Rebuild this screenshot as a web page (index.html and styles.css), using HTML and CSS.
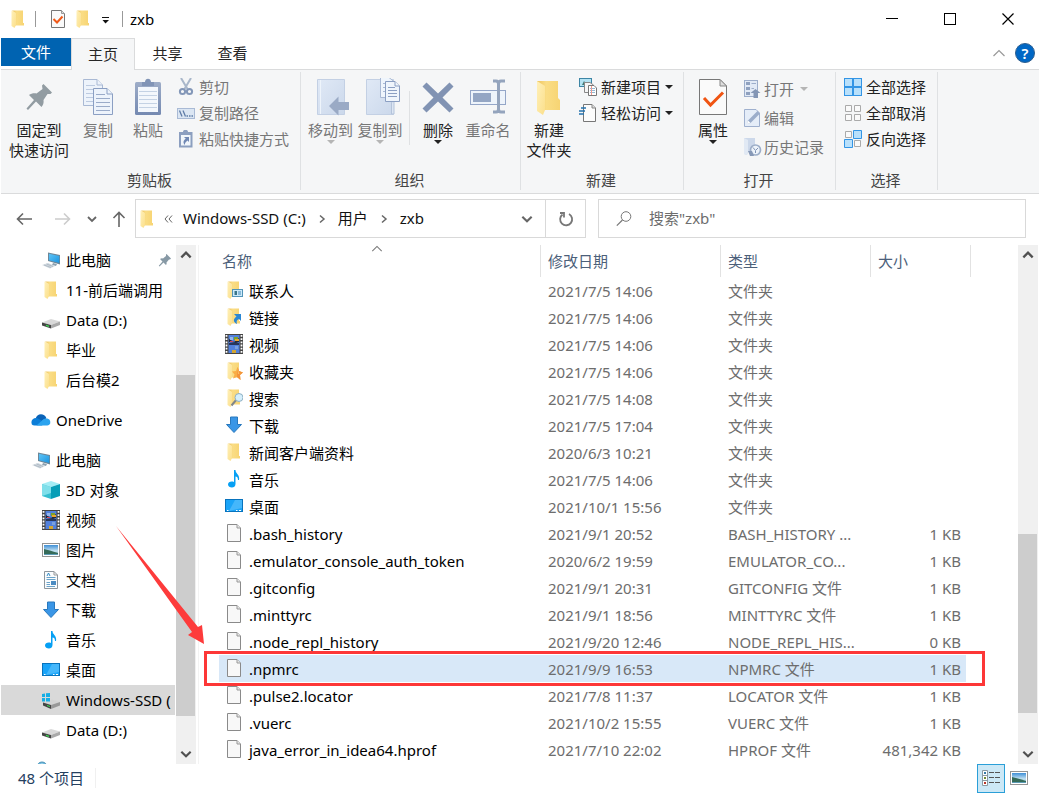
FILE: index.html
```html
<!DOCTYPE html>
<html lang="zh-CN">
<head>
<meta charset="utf-8">
<title>zxb</title>
<link rel="stylesheet" href="styles.css">
</head>
<body>
<svg class="sprite" aria-hidden="true">
  <defs>
    <linearGradient id="gold" x1="0" y1="0" x2="1" y2="0"><stop offset="0" stop-color="#eec35d"/><stop offset=".4" stop-color="#fadd85"/><stop offset="1" stop-color="#f7d473"/></linearGradient>
    <linearGradient id="flap" x1="0" y1="0" x2="1" y2="1"><stop offset="0" stop-color="#fff0b8"/><stop offset="1" stop-color="#fbdf8b"/></linearGradient>
    <linearGradient id="screen" x1="0" y1="0" x2="1" y2="1"><stop offset="0" stop-color="#5ec4f7"/><stop offset="1" stop-color="#1b95e0"/></linearGradient>
    <linearGradient id="steel" x1="0" y1="0" x2="0" y2="1"><stop offset="0" stop-color="#9eadc8"/><stop offset="1" stop-color="#7489b1"/></linearGradient>
    <linearGradient id="pale" x1="0" y1="0" x2="1" y2="1"><stop offset="0" stop-color="#e0e9f6"/><stop offset="1" stop-color="#cbd8eb"/></linearGradient>
    <linearGradient id="sky" x1="0" y1="0" x2="0" y2="1"><stop offset="0" stop-color="#3f8fd6"/><stop offset=".6" stop-color="#c6e3f2"/><stop offset="1" stop-color="#6fa6b8"/></linearGradient>
  </defs>
  <symbol id="folder" viewBox="0 0 18 18"><path d="M3 .5H14V13H15V15.500H6V3Z" fill="url(#gold)"/><path d="M2.500.5L7 3V15L5.500 18L2.500 16Z" fill="url(#flap)"/></symbol>
  <symbol id="big-folder" viewBox="0 0 40 40"><path d="M8 3H29V20L31 22V32H8Z" fill="url(#gold)"/><path d="M8 3L16 8V32L14 37L8 33Z" fill="url(#flap)"/></symbol>
  <symbol id="check" viewBox="0 0 18 18"><path d="M2.500.5H12.500L15.500 3.500V17.500H2.500Z" fill="#fafafa" stroke="#777"/><path d="M12.500.5V3.500H15.500" fill="#ddd" stroke="#999"/><path d="M4.500 9L8 12.500L13.500 6.500" fill="none" stroke="#f05a1a" stroke-width="2"/></symbol>
  <symbol id="big-check" viewBox="0 0 40 40"><path d="M6.500 1.500H27L33.500 8V36.500H6.500Z" fill="#fafafa" stroke="#777"/><path d="M27 1.500V8H33.500Z" fill="#ddd" stroke="#888"/><path d="M11 20L17.500 27L30 14.500" fill="none" stroke="#f05412" stroke-width="3"/></symbol>
  <symbol id="big-pin" viewBox="0 0 40 40"><path d="M24.500 6L33 14.500L31.500 16L28.500 16L24.500 22C25 25 24 27 22.500 29L17 23.500L9 32L7.500 30.500L15 22L10 17C12 15.500 15 15 17.500 15.500L23.500 11L23 7.500Z" fill="#929ca2"/></symbol>
  <symbol id="copy" viewBox="0 0 40 40"><g fill="#edf3fb" stroke="#a9b9d4"><path d="M5.500 1.500H19L24.500 7V27.500H5.500Z"/><path d="M19 1.500V7H24.500"/><path d="M8 7.500H17M8 11.500H21M8 15.500H21M8 19.500H21M8 23.500H21" stroke="#bccae0"/><path d="M15.500 10.500H29L34.500 16V36.500H15.500Z" stroke="#8b9fc3"/><path d="M29 10.500V16H34.500" stroke="#8b9fc3"/><path d="M18 16.500H27M18 20.500H32M18 24.500H32M18 28.500H32M18 32.500H32" stroke="#9aabc9"/></g></symbol>
  <symbol id="paste" viewBox="0 0 40 40"><rect x="7" y="4" width="26" height="33" rx="1.500" fill="url(#steel)"/><path d="M10 9H30V34H10Z" fill="#f3f7fc"/><path d="M14 4H17C17-.5 23-.5 23 4H26V8H14Z" fill="#8194b6"/><path d="M11 13.500H29M11 17.500H29M11 21.500H29M11 25.500H29M11 29.500H29" stroke="#c4d2e4"/></symbol>
  <symbol id="cut" viewBox="0 0 18 18"><path d="M4 0L10.500 11M14 0L7.500 11" stroke="#a9b7ca" stroke-width="2"/><g fill="none" stroke="#8397b8" stroke-width="2"><circle cx="5.500" cy="13.500" r="2.600"/><circle cx="12.500" cy="13.500" r="2.600"/></g></symbol>
  <symbol id="path" viewBox="0 0 18 18"><rect x=".5" y="4.500" width="17" height="10" fill="#dbe6f3" stroke="#a9bad5"/><path d="M2.500 6.500L5 12.500M6 6.500L8.500 12.500" stroke="#5f7da8" stroke-width="1.300"/><path d="M9.500 12H11M12 12H13.500M14.500 12H16" stroke="#5f7da8" stroke-width="1.300"/></symbol>
  <symbol id="shortcut" viewBox="0 0 18 18"><path d="M2 2H6C6-1 11-1 11 2H15.500V17.500H2Z" fill="#8c9fc0"/><path d="M4 5H13.500V15.500H4Z" fill="#f1f6fb"/><path d="M7 7H12V12L10.500 10.500C8.500 12 7.500 13.500 8 15C5.500 13 6.500 10 8.800 8.800Z" fill="#7088b4"/></symbol>
  <symbol id="move" viewBox="0 0 40 40"><path d="M6.500 1.500H33.500V36.500H6.500Z" fill="url(#pale)" stroke="#c3d0e4"/><path d="M9.500 2V36" stroke="#eef4fb"/><path d="M18 28L27.500 18.500V24H38V32H27.500V37.500Z" fill="#9aaac5"/></symbol>
  <symbol id="copyto" viewBox="0 0 40 40"><path d="M6.500 1.500H33.500V36.500H6.500Z" fill="url(#pale)" stroke="#c3d0e4"/><path d="M31.500 36V25Q31.500 23 34 23V36Z" fill="#dce6f3" stroke="#b4c3da"/><g fill="#eff5fc" stroke="#a9b9d4"><path d="M20.500-.5H29L34.500 4V19.500H20.500Z"/><path d="M23 5.500H31M23 9.500H31M23 13.500H31"/><path d="M25.500 3.500H35L39.500 8V23.500H25.500Z" stroke="#8b9fc3"/><path d="M35 3.500V8H39.500M28 9.500H35M28 12.500H37M28 15.500H37M28 18.500H37" stroke="#8b9fc3"/></g></symbol>
  <symbol id="delete" viewBox="0 0 40 40"><path d="M8.500 4.500L20 15.500L31.500 4.500L35.500 8.500L24.500 19.500L35.500 30.500L31.500 34.500L20 23.500L8.500 34.500L4.500 30.500L15.500 19.500L4.500 8.500Z" fill="#8193b3"/></symbol>
  <symbol id="rename" viewBox="0 0 40 40"><rect x="2.500" y="12.500" width="35" height="14" fill="#eef4fb" stroke="#94a6c8"/><rect x="5" y="15" width="18" height="9" fill="#94a6c4"/><path d="M25 3H28Q30.500 3 30.500 6V31Q30.500 34 28 34H25M37 3H33Q30.500 3 30.500 6M37 34H33Q30.500 34 30.500 31" fill="none" stroke="#94a4bd" stroke-width="3"/></symbol>
  <symbol id="new-item" viewBox="0 0 18 18"><rect x=".5" y=".5" width="12" height="8" fill="#b4e3f3" stroke="#3d85a5"/><path d="M3 7L5 3L8 7Z" fill="#427c77"/><path d="M5.500 4.500H11L14.500 7V14.500H5.500Z" fill="#f6f6f6" stroke="#888"/><path d="M9.500 7.500H15L17.500 10V17.500H9.500Z" fill="#fff" stroke="#777"/><path d="M11 10.500H16M11 12.500H16M11 14.500H16" stroke="#94b9d4"/><path d="M12.500 8V17" stroke="#ee9a90"/></symbol>
  <symbol id="easy" viewBox="0 0 18 18"><path d="M4.500.5H13L16.500 4V17.500H4.500Z" fill="#fcfcfc" stroke="#777"/><path d="M13 .5V4H16.500" fill="#ddd" stroke="#888"/><path d="M2 4H7M0 7H6M-1 10H5" stroke="#2573ae" stroke-width="1.300"/></symbol>
  <symbol id="open" viewBox="0 0 18 18"><rect x=".5" y=".5" width="13" height="16" fill="#e2eaf6" stroke="#9daecb"/><path d="M2 2H6V5H2ZM2 7H6V10H2ZM2 12H6V15H2Z" fill="#8fa1bf"/><path d="M7.500 3.500H12M7.500 8.500H10" stroke="#9daecb"/><path d="M11.500 9L16.500 13H14V18H9.500V13H6.500Z" fill="#8496b5"/></symbol>
  <symbol id="edit" viewBox="0 0 18 18"><path d="M.5.5H12L15.500 4V17.500H.5Z" fill="#e5edf8" stroke="#9fb0ce"/><path d="M3 15L4 11.500L13.500 2L16 4.500L6.500 14Z" fill="#9badca"/><path d="M3 15L4 11.500L6.500 14Z" fill="#fff"/></symbol>
  <symbol id="history" viewBox="0 0 18 18"><path d="M0 0H11V14H4L3 17L0 16Z" fill="#ccd8ea"/><path d="M0 0L4 2V14L3 17L0 16Z" fill="#e1e9f4"/><circle cx="11.500" cy="12" r="5" fill="#edf3fa" stroke="#9daec8" stroke-width="1.700"/><path d="M9 9.500L11.500 12.500L14 10M11.500 13V15" stroke="#7f93b5" fill="none"/><path d="M4 13H8L10 18H6Z" fill="#8799b7"/></symbol>
  <symbol id="select-all" viewBox="0 0 18 18"><path d="M0 0H18V18H0Z" fill="#3395e5"/><path d="M1 1H8V8H1ZM10 1H17V8H10ZM1 10H8V17H1ZM10 10H17V17H10Z" fill="#b8e0fb"/></symbol>
  <symbol id="select-none" viewBox="0 0 18 18"><path d="M1.500 1.500H7.500V7.500H1.500ZM10.500 1.500H16.500V7.500H10.500ZM1.500 10.500H7.500V16.500H1.500ZM10.500 10.500H16.500V16.500H10.500Z" fill="#fafafa" stroke="#aaa"/></symbol>
  <symbol id="invert" viewBox="0 0 18 18"><path d="M1.500 1.500H7.500V7.500H1.500ZM10.500 10.500H16.500V16.500H10.500Z" fill="#fafafa" stroke="#aaa"/><path d="M9.500.5H17.500V8.500H9.500ZM.5 9.500H8.500V17.500H.5Z" fill="#b8e0fb" stroke="#3395e5"/></symbol>
  <symbol id="pc" viewBox="0 0 18 18"><path d="M6 1.500L18 4V13.500L6 10Z" fill="#6d8697"/><path d="M7 2.800L17.300 5V12L7 9.200Z" fill="url(#screen)"/><path d="M11 12L15 13L14 15L10 14Z" fill="#8ca1b0"/><path d="M0 14L6 12L13 15L8 17.500Z" fill="#cfd8df"/><path d="M2 14L9 16.500M4.500 13L11 15.500" stroke="#9daab5" stroke-width=".6"/></symbol>
  <symbol id="drive" viewBox="0 0 18 18"><path d="M0 11.500L9 8L18 10.500L9 14Z" fill="#d9d9d9"/><path d="M0 11.500L9 14V17.500L0 14.500Z" fill="#454545"/><path d="M9 14L18 10.500V14L9 17.500Z" fill="#aaa"/><path d="M4 13.800L7 14.700V15.900L4 15Z" fill="#38e053"/></symbol>
  <symbol id="windrive" viewBox="0 0 18 18"><path d="M2 12L10 8.500L18 11L9 14Z" fill="#d4d4d4"/><path d="M1 11.500L9 14V18L1 14.500Z" fill="#454545"/><path d="M9 14L18 11V14.500L9 18Z" fill="#999"/><path d="M5 14L8 15V16L5 15Z" fill="#38e053"/><path d="M-1 3L3 2.500V6H-1ZM4 2.300L8 2V6H4ZM-1 7H3V10.500H-1ZM4 7H8V10.500H4Z" fill="#16aee5"/></symbol>
  <symbol id="cloud" viewBox="0 0 22 18"><path d="M5 8C6 1 15 1 17 7L11 11Z" fill="#0a63b8"/><path d="M1 14C-1 9 3 6 7 7L16 12L12 15H4Q2 15 1 14Z" fill="#0c7ed8"/><path d="M6 15L14 8C19 6 22 9 21 13Q20 15 18 15Z" fill="#2ba3ef"/></symbol>
  <symbol id="cube" viewBox="0 0 18 18"><path d="M0 3L9 0L18 3L9 6Z" fill="#a4edf5"/><path d="M0 3L9 6V18L0 15Z" fill="#35bed0"/><path d="M9 6L18 3V15L9 18Z" fill="#079eb7"/><path d="M0 3L9 6V12L0 15Z" fill="#7fdfea"/></symbol>
  <symbol id="film" viewBox="0 0 18 20"><path d="M0 0H18V20H0Z" fill="#444"/><path d="M3.500 1H14.500V19H3.500Z" fill="#5281dc"/><path d="M4 5L9 8L14 4V8L11 9L4 8Z" fill="#252938"/><path d="M5 3H8V6H5Z" fill="#95b6ec"/><path d="M9 3H13V6H9Z" fill="#7ca22c"/><path d="M10 5H14V7H10Z" fill="#eda72b"/><path d="M5 7H8V8H5Z" fill="#d8465b"/><path d="M4 9H14V11H4Z" fill="#28375a"/><path d="M10 12H13V15H10Z" fill="#7aa1df"/><path d="M7 16H11V19H7Z" fill="#d3a631"/><path d="M1.500 1V20M16.500 1V20" stroke="#fff" stroke-width="1.800" stroke-dasharray="1.800 1.400"/></symbol>
  <symbol id="photo" viewBox="0 0 18 18"><rect x=".5" y="2.500" width="17" height="13" fill="#fff" stroke="#949494"/><path d="M2 4H16V14H2Z" fill="url(#sky)"/><path d="M2 8Q7 9 16 12V14H2Z" fill="#356b59"/><path d="M2 13H16V14H2Z" fill="#5c9bb5"/></symbol>
  <symbol id="doc" viewBox="0 0 18 18"><path d="M2.500.5H12L15.500 4V17.500H2.500Z" fill="#fafcfd" stroke="#8d969d"/><path d="M12 .5V4H15.500" fill="none" stroke="#999"/><path d="M5 5L6.500 2L8 5" fill="none" stroke="#318bc7"/><path d="M4.500 6.500H13.500M4.500 8.500H13.500M4.500 11.500H8M4.500 13.500H8M4.500 15.500H13" stroke="#6aa3ca"/><path d="M9 10H14V14H9Z" fill="#4b8bc2"/></symbol>
  <symbol id="down" viewBox="0 0 18 18"><path d="M5.500 1H12.500V8.500H16.500L9 16.500L1.500 8.500H5.500Z" fill="#3a96e6" stroke="#2878bd"/></symbol>
  <symbol id="music" viewBox="0 0 18 18"><path d="M9 0H10.500C10.500 4 15 4 14 10H13C13 7.500 12 6.500 10.500 6.500V14C10.500 19 3 18 3 14.500C3 12 6 11 9 12Z" fill="#06a0f4"/></symbol>
  <symbol id="desk" viewBox="0 0 18 18"><rect x=".5" y="2.500" width="17" height="12" fill="#1aa4f8" stroke="#0873bd"/><path d="M10 3H17V11L4 14Z" fill="#45b7fb"/><path d="M2 13.500H3.500M11 13.500H12.500M14 13.500H16" stroke="#fff"/></symbol>
  <symbol id="network" viewBox="0 0 18 18"><circle cx="10" cy="6" r="5" fill="#71bce0" stroke="#4a91b5"/><path d="M7 5Q10 0 13 5L9 8Z" fill="#d9f0f6"/><path d="M5 7H17V15H5Z" fill="#258ed4"/></symbol>
  <symbol id="file" viewBox="0 0 18 18"><path d="M2.500.5H12L15.500 4V17.500H2.500Z" fill="#f8f8f8" stroke="#8a8a8a"/><path d="M12 .5V4H15.500" fill="#e7e7e7" stroke="#999"/></symbol>
  <symbol id="f-contact" viewBox="0 0 18 18"><use href="#folder"/><rect x="7.500" y="8.500" width="10" height="7" fill="#cdeafa" stroke="#5394b7"/><path d="M9.500 10H12V14H9.500Z" fill="#397489"/><path d="M13 11H16M13 13H16" stroke="#4589b7"/></symbol>
  <symbol id="f-link" viewBox="0 0 18 18"><use href="#folder"/><path d="M9 6H16V13L14 11C12 12 11 13 12 16C8 14 8 11 11.500 8.500Z" fill="#2b87d3"/></symbol>
  <symbol id="f-star" viewBox="0 0 18 18"><use href="#folder"/><path d="M12.500 5L14 9L18 10.500L15 13L15.500 18L12 15L8 16.500L9.500 12.500L7 9.500L11 9Z" fill="#f9ad45"/><path d="M12.500 5L14 9L18 10.500L15 13L15.500 18L12 15Z" fill="#f3933a"/><path d="M12.500 5L13 12L18 10.500L14 11.500Z" fill="#fcc869"/></symbol>
  <symbol id="f-search" viewBox="0 0 18 18"><use href="#folder"/><path d="M11.500 10.500L6.500 16.500" stroke="#80868a" stroke-width="2"/><circle cx="14" cy="8.500" r="4" fill="#d5effc" stroke="#8fb0c3"/></symbol>
  <symbol id="small-pin" viewBox="0 0 14 14"><path d="M8.500 1L13 5.500L12 6.500H11L8.500 9.500Q9 11 8 12L5.500 9.500L1.500 13.500L.8 12.700L4.500 8.500L2 6Q3.500 5 5 5.500L8 3V1.500Z" fill="#8799a5"/></symbol>
  <symbol id="up" viewBox="0 0 12 12"><path d="M2 8L6 4L10 8" fill="none" stroke="currentColor" stroke-width="2"/></symbol>
  <symbol id="chev-down" viewBox="0 0 12 12"><path d="M2 4L6 8L10 4" fill="none" stroke="currentColor" stroke-width="1.800"/></symbol>
  <symbol id="chev-right" viewBox="0 0 12 12"><path d="M4 2.500L8 6L4 9.500" fill="none" stroke="currentColor" stroke-width="1.500"/></symbol>
  <symbol id="thin-up" viewBox="0 0 14 8"><path d="M1.500 7L7 1.500L12.500 7" fill="none" stroke="currentColor" stroke-width="1.200"/></symbol>
  <symbol id="arrow" viewBox="0 0 16 14"><path d="M16 7H1.500M7 1.500L1.500 7L7 12.500" fill="none" stroke="currentColor" stroke-width="1.600"/></symbol>
  <symbol id="list-view" viewBox="0 0 18 18"><path d="M.5 1.500H5.500V16.500H.5ZM.5 6.500H5.500M.5 11.500H5.500" fill="#fff" stroke="#8b9aa2"/><path d="M2 3H4V5H2Z" fill="#347ba7"/><path d="M2 8H4V10H2Z" fill="#738d35"/><path d="M2 13H4V15H2Z" fill="#b9372a"/><path d="M7 3.500H12M13 3.500H18M7 8.500H12M13 8.500H18M7 13.500H12M13 13.500H18" stroke="#555"/></symbol>
</svg>

<div class="window">
  <header class="titlebar">
    <svg class="i18 app-icon"><use href="#folder"/></svg>
    <span class="bar"></span>
    <button class="quick" aria-label="属性"><svg class="i18"><use href="#check"/></svg></button>
    <button class="quick" aria-label="新建文件夹"><svg class="i18"><use href="#folder"/></svg></button>
    <button class="quick more" aria-label="自定义快速访问工具栏"><svg width="8" height="8" viewBox="0 0 8 8"><path d="M0 .5H7" stroke="#111"/><path d="M.5 3H7L3.500 6.500Z" fill="#111"/></svg></button>
    <span class="bar"></span>
    <h1 class="title">zxb</h1>
    <div class="caption">
      <button aria-label="最小化"><svg width="12" height="12"><path d="M0 5.500H12" stroke="#000"/></svg></button>
      <button aria-label="最大化"><svg width="12" height="12"><rect x=".5" y=".5" width="11" height="11" fill="none" stroke="#000"/></svg></button>
      <button aria-label="关闭"><svg width="12" height="12"><path d="M.5.5L11.500 11.500M11.500.5L.5 11.500" stroke="#000" stroke-width="1.200"/></svg></button>
    </div>
  </header>

  <nav class="tabs">
    <button class="tab file-tab">文件</button>
    <button class="tab active">主页</button>
    <button class="tab">共享</button>
    <button class="tab">查看</button>
    <div class="tab-tools">
      <button class="collapse" aria-label="最小化功能区"><svg width="14" height="8"><use href="#thin-up"/></svg></button>
      <button class="help" aria-label="帮助">?</button>
    </div>
  </nav>

  <section class="ribbon">
    <div class="group g-clip">
      <div class="tools">
        <button class="big wide"><svg class="i40"><use href="#big-pin"/></svg><span>固定到<br>快速访问</span></button>
        <button class="big off"><svg class="i40"><use href="#copy"/></svg><span>复制</span></button>
        <button class="big off"><svg class="i40"><use href="#paste"/></svg><span>粘贴</span></button>
        <div class="stack">
          <button class="small off"><svg class="i18"><use href="#cut"/></svg>剪切</button>
          <button class="small off"><svg class="i18"><use href="#path"/></svg>复制路径</button>
          <button class="small off"><svg class="i18"><use href="#shortcut"/></svg>粘贴快捷方式</button>
        </div>
      </div>
      <div class="name">剪贴板</div>
    </div>
    <div class="group g-org">
      <div class="tools">
        <button class="big off"><svg class="i40"><use href="#move"/></svg><span>移动到</span><i class="drop"></i></button>
        <button class="big off"><svg class="i40"><use href="#copyto"/></svg><span>复制到</span><i class="drop"></i></button>
        <span class="divide"></span>
        <button class="big"><svg class="i40"><use href="#delete"/></svg><span>删除</span><i class="drop"></i></button>
        <button class="big off"><svg class="i40"><use href="#rename"/></svg><span>重命名</span></button>
      </div>
      <div class="name">组织</div>
    </div>
    <div class="group g-new">
      <div class="tools">
        <button class="big"><svg class="i40"><use href="#big-folder"/></svg><span>新建<br>文件夹</span></button>
        <div class="stack">
          <button class="small"><svg class="i18"><use href="#new-item"/></svg>新建项目<i class="drop"></i></button>
          <button class="small"><svg class="i18"><use href="#easy"/></svg>轻松访问<i class="drop"></i></button>
        </div>
      </div>
      <div class="name">新建</div>
    </div>
    <div class="group g-open">
      <div class="tools">
        <button class="big"><svg class="i40"><use href="#big-check"/></svg><span>属性</span><i class="drop"></i></button>
        <div class="stack loose">
          <button class="small off"><svg class="i18"><use href="#open"/></svg>打开<i class="drop"></i></button>
          <button class="small off"><svg class="i18"><use href="#edit"/></svg>编辑</button>
          <button class="small off"><svg class="i18"><use href="#history"/></svg>历史记录</button>
        </div>
      </div>
      <div class="name">打开</div>
    </div>
    <div class="group g-select">
      <div class="tools">
        <div class="stack">
          <button class="small"><svg class="i18"><use href="#select-all"/></svg>全部选择</button>
          <button class="small"><svg class="i18"><use href="#select-none"/></svg>全部取消</button>
          <button class="small"><svg class="i18"><use href="#invert"/></svg>反向选择</button>
        </div>
      </div>
      <div class="name">选择</div>
    </div>
  </section>

  <div class="navbar">
    <div class="history">
      <button aria-label="后退"><svg width="16" height="14"><use href="#arrow"/></svg></button>
      <button class="dim" aria-label="前进"><svg width="16" height="14" viewBox="0 0 16 14"><path d="M0 7H14.500M9 1.500L14.500 7L9 12.500" fill="none" stroke="currentColor" stroke-width="1.600"/></svg></button>
      <button class="narrow" aria-label="最近位置"><svg width="12" height="12"><use href="#chev-down"/></svg></button>
      <button class="narrow" aria-label="上移"><svg width="14" height="16" viewBox="0 0 14 16"><path d="M7 16V1.500M1.500 7L7 1.500L12.500 7" fill="none" stroke="currentColor" stroke-width="1.600"/></svg></button>
    </div>
    <div class="address">
      <svg class="i18"><use href="#folder"/></svg>
      <button class="laquo" aria-label="上级位置"><svg width="9" height="8" viewBox="0 0 9 8"><path d="M4 .5L1 4L4 7.500M8 .5L5 4L8 7.500" fill="none" stroke="#666"/></svg></button>
      <a class="crumb" href="#c">Windows-SSD (C:)</a>
      <svg class="sep" width="12" height="12"><use href="#chev-right"/></svg>
      <a class="crumb" href="#users">用户</a>
      <svg class="sep" width="12" height="12"><use href="#chev-right"/></svg>
      <a class="crumb" href="#zxb">zxb</a>
      <button class="recent" aria-label="以前的位置"><svg width="14" height="14"><use href="#chev-down"/></svg></button>
      <button class="refresh" aria-label="刷新"><svg width="16" height="16" viewBox="0 0 16 16"><path d="M4.500 3.500A6 6 0 1 0 11 3M2 2H6V6.500" fill="none" stroke="#777" stroke-width="1.800"/></svg></button>
    </div>
    <label class="search">
      <svg width="16" height="16" viewBox="0 0 16 16"><circle cx="10" cy="5.500" r="4.800" fill="none" stroke="#777"/><path d="M6.500 9L.8 14.700" stroke="#777" stroke-width="1.200"/></svg>
      <input type="text" aria-label="搜索" placeholder='搜索"zxb"'>
    </label>
  </div>

  <div class="body">
    <aside class="tree">
      <button class="node"><svg class="i18"><use href="#pc"/></svg><span>此电脑</span><svg class="pinned" width="14" height="14"><use href="#small-pin"/></svg></button>
      <button class="node"><svg class="i18"><use href="#folder"/></svg><span>11-前后端调用</span></button>
      <button class="node"><svg class="i18"><use href="#drive"/></svg><span>Data (D:)</span></button>
      <button class="node"><svg class="i18"><use href="#folder"/></svg><span>毕业</span></button>
      <button class="node"><svg class="i18"><use href="#folder"/></svg><span>后台模2</span></button>
      <button class="node root"><svg class="i20"><use href="#cloud"/></svg><span>OneDrive</span></button>
      <button class="node root"><svg class="i20"><use href="#pc"/></svg><span>此电脑</span></button>
      <button class="node"><svg class="i18"><use href="#cube"/></svg><span>3D 对象</span></button>
      <button class="node"><svg class="film"><use href="#film"/></svg><span>视频</span></button>
      <button class="node"><svg class="i18"><use href="#photo"/></svg><span>图片</span></button>
      <button class="node"><svg class="i18"><use href="#doc"/></svg><span>文档</span></button>
      <button class="node"><svg class="i18"><use href="#down"/></svg><span>下载</span></button>
      <button class="node"><svg class="i18"><use href="#music"/></svg><span>音乐</span></button>
      <button class="node"><svg class="i18"><use href="#desk"/></svg><span>桌面</span></button>
      <button class="node current"><svg class="i18"><use href="#windrive"/></svg><span>Windows-SSD (</span></button>
      <button class="node"><svg class="i18"><use href="#drive"/></svg><span>Data (D:)</span></button>
      <button class="node root" aria-label="网络"><svg class="i20"><use href="#network"/></svg></button>
    </aside>
    <div class="scroll tree-scroll">
      <button aria-label="向上滚动"><svg width="14" height="14"><use href="#up"/></svg></button>
      <span class="before"></span><span class="thumb"></span><span class="after"></span>
      <button aria-label="向下滚动"><svg width="14" height="14"><use href="#chev-down"/></svg></button>
    </div>
    <main class="files">
      <table>
        <colgroup><col class="c-name"><col class="c-date"><col class="c-type"><col class="c-size"></colgroup>
        <thead><tr><th>名称<svg class="sort" width="12" height="7"><use href="#thin-up"/></svg></th><th>修改日期</th><th>类型</th><th>大小</th></tr></thead>
        <tbody>
          <tr><td><svg class="i18"><use href="#f-contact"/></svg>联系人</td><td>2021/7/5 14:06</td><td>文件夹</td><td></td></tr>
          <tr><td><svg class="i18"><use href="#f-link"/></svg>链接</td><td>2021/7/5 14:06</td><td>文件夹</td><td></td></tr>
          <tr><td><svg class="film"><use href="#film"/></svg>视频</td><td>2021/7/5 14:06</td><td>文件夹</td><td></td></tr>
          <tr><td><svg class="i18"><use href="#f-star"/></svg>收藏夹</td><td>2021/7/5 14:06</td><td>文件夹</td><td></td></tr>
          <tr><td><svg class="i18"><use href="#f-search"/></svg>搜索</td><td>2021/7/5 14:08</td><td>文件夹</td><td></td></tr>
          <tr><td><svg class="i18"><use href="#down"/></svg>下载</td><td>2021/7/5 17:04</td><td>文件夹</td><td></td></tr>
          <tr><td><svg class="i18"><use href="#folder"/></svg>新闻客户端资料</td><td>2020/6/3 10:21</td><td>文件夹</td><td></td></tr>
          <tr><td><svg class="i18"><use href="#music"/></svg>音乐</td><td>2021/7/5 14:06</td><td>文件夹</td><td></td></tr>
          <tr><td><svg class="i18"><use href="#desk"/></svg>桌面</td><td>2021/10/1 15:56</td><td>文件夹</td><td></td></tr>
          <tr><td><svg class="i18"><use href="#file"/></svg>.bash_history</td><td>2021/9/1 20:52</td><td>BASH_HISTORY ...</td><td>1 KB</td></tr>
          <tr><td><svg class="i18"><use href="#file"/></svg>.emulator_console_auth_token</td><td>2020/6/2 19:59</td><td>EMULATOR_CO...</td><td>1 KB</td></tr>
          <tr><td><svg class="i18"><use href="#file"/></svg>.gitconfig</td><td>2021/9/1 20:31</td><td>GITCONFIG 文件</td><td>1 KB</td></tr>
          <tr><td><svg class="i18"><use href="#file"/></svg>.minttyrc</td><td>2021/9/1 18:56</td><td>MINTTYRC 文件</td><td>1 KB</td></tr>
          <tr><td><svg class="i18"><use href="#file"/></svg>.node_repl_history</td><td>2021/9/20 12:46</td><td>NODE_REPL_HIS...</td><td>0 KB</td></tr>
          <tr class="picked"><td><svg class="i18"><use href="#file"/></svg>.npmrc</td><td>2021/9/9 16:53</td><td>NPMRC 文件</td><td>1 KB</td></tr>
          <tr><td><svg class="i18"><use href="#file"/></svg>.pulse2.locator</td><td>2021/7/8 11:37</td><td>LOCATOR 文件</td><td>1 KB</td></tr>
          <tr><td><svg class="i18"><use href="#file"/></svg>.vuerc</td><td>2021/10/2 15:55</td><td>VUERC 文件</td><td>1 KB</td></tr>
          <tr><td><svg class="i18"><use href="#file"/></svg>java_error_in_idea64.hprof</td><td>2021/7/10 22:02</td><td>HPROF 文件</td><td>481,342 KB</td></tr>
        </tbody>
      </table>
    </main>
    <div class="scroll file-scroll">
      <button aria-label="向上滚动"><svg width="14" height="14"><use href="#up"/></svg></button>
      <span class="before"></span><span class="thumb"></span><span class="after"></span>
      <button aria-label="向下滚动"><svg width="14" height="14"><use href="#chev-down"/></svg></button>
    </div>
    <svg class="markup" viewBox="0 0 880 180" aria-hidden="true">
      <path d="M0 0L82 101L86 99L88 118L72 109L76 106Z" fill="#fd3b3b"/>
      <rect x="89.500" y="126.500" width="778" height="32" fill="none" stroke="#fd3737" stroke-width="3"/>
    </svg>
  </div>

  <footer class="status">
    <span class="count">48 个项目</span>
    <div class="views">
      <button class="view on" aria-label="详细信息"><svg class="i18"><use href="#list-view"/></svg></button>
      <button class="view" aria-label="大图标"><svg class="i18"><use href="#photo"/></svg></button>
    </div>
  </footer>
</div>
</body>
</html>
```
FILE: styles.css
```css
* { box-sizing: border-box; }
body {
  margin: 0;
  background: #fff;
  color: #000;
  font: 15px/20px "Noto Sans", "Noto Sans CJK SC", sans-serif;
}
button, input { font: inherit; color: inherit; border: 0; padding: 0; margin: 0; background: none; }
svg { display: block; flex: none; overflow: visible; }
.sprite { position: absolute; width: 0; height: 0; }
.i18 { width: 18px; height: 18px; }
.i20 { width: 20px; height: 18px; }
.i40 { width: 40px; height: 40px; }
.film { width: 18px; height: 20px; }

.window { display: flex; flex-direction: column; height: 100vh; padding-left: 1px; overflow: hidden; }

/* title bar */
.titlebar { display: flex; align-items: center; height: 38px; flex: none; padding-left: 8px; }
.bar { width: 1px; height: 16px; background: #999; margin-left: 8px; }
.bar + .quick { margin-left: 13px; }
.quick + .quick { margin-left: 7px; }
.quick.more { width: 8px; margin: 4px 4px 0 10px; }
.title { margin: 0 0 0 7px; font-size: 15px; font-weight: 400; }
.caption { display: flex; margin-left: auto; margin-right: 2px; }
.caption button { width: 58px; height: 38px; display: grid; place-items: center; }

/* tab strip */
.tabs { display: flex; height: 32px; flex: none; border-bottom: 1px solid #dadbdc; color: #262626; }
.tab { width: 65px; height: 30px; }
.file-tab { width: 70px; height: 28px; background: #0063b1; color: #fff; }
.tab.active { width: 64px; height: 32px; padding-bottom: 2px; background: #f5f6f7; border: 1px solid #dadbdc; border-bottom: 0; }
.tab-tools { display: flex; align-items: center; gap: 9px; margin-left: auto; padding: 0 4px 2px 0; }
.collapse { color: #999; }
.help { width: 20px; height: 20px; border-radius: 50%; background: #0067c5; border: 1px solid #2f5f8f; color: #fff; line-height: 18px; font-weight: 600; }

/* ribbon */
.ribbon { display: flex; flex: none; height: 124px; background: #f5f6f7; border-bottom: 1px solid #dadbdc; color: #222; }
.group { display: flex; flex-direction: column; margin: 2px 0 3px; border-right: 1px solid #dfe1e3; flex: none; }
.g-clip { width: 300px; }
.g-org { width: 220px; }
.g-new { width: 163px; }
.g-open { width: 152px; }
.g-select { width: 102px; }
.tools { display: flex; flex: 1; padding: 2px 0 0 4px; }
.name { height: 20px; padding-right: 2px; text-align: center; color: #444; }
.big { display: flex; flex-direction: column; align-items: center; width: 50px; padding-top: 4px; align-self: flex-start; white-space: nowrap; }
.big span { margin-top: 2px; }
.big.wide { width: 68px; }
.g-new .tools { padding-left: 3px; }
.off { color: #777; }
.drop { width: 0; height: 0; border: 4px solid transparent; border-top-color: #222; border-bottom: 0; }
.off .drop { border-top-color: #b5b5b5; }
.stack { display: flex; flex-direction: column; margin-left: 4px; }
.g-new .stack { margin-left: 5px; }
.loose { margin-left: 6px; }
.small { display: flex; align-items: center; gap: 4px; height: 26px; white-space: nowrap; }
.small .drop { margin-left: 0; }
.loose .small { height: 29px; gap: 2px; }
.loose .drop { margin-left: 4px; }
.divide { width: 1px; height: 54px; margin: 17px 3px 0 4px; background: #dfe1e3; }
.g-org .tools { padding-left: 5px; }
.g-org .big:first-child { width: 49px; }

/* navigation bar */
.navbar { display: grid; grid-template-columns: 134px minmax(0, 451fr) minmax(0, 440fr); flex: none; padding: 5px 13px 7px 0; }
.history { display: flex; align-items: center; padding-left: 13px; color: #666; }
.history button { width: 40px; height: 39px; display: flex; align-items: center; padding-left: 2px; }
.history .narrow { width: 26px; }
.history .dim { width: 32px; color: #ccc; }
.address { display: flex; align-items: center; height: 39px; border: 1px solid #d9d9d9; padding-left: 2px; }
.laquo { margin: 0 10px 0 8px; }
.crumb { padding-bottom: 2px; color: #111; text-decoration: none; white-space: nowrap; }
.sep { margin: 0 10px; color: #666; }
.recent { margin-left: auto; width: 36px; height: 37px; display: grid; place-items: center; color: #666; }
.refresh { width: 40px; height: 37px; border-left: 1px solid #d9d9d9; display: grid; place-items: center; }
.search { display: flex; align-items: center; height: 39px; margin-left: 12px; border: 1px solid #d9d9d9; padding-left: 17px; gap: 17px; }
.search input { flex: 1; min-width: 0; padding-bottom: 2px; outline: 0; }
.search input::placeholder { color: #6d6d6d; opacity: 1; }

/* panes */
.body { position: relative; display: flex; flex: 1; min-height: 0; overflow: hidden; }
.tree { width: 175px; overflow: hidden; flex: none; }
.node { display: flex; align-items: center; gap: 6px; width: 174px; height: 30px; padding-left: 41px; overflow: hidden; white-space: nowrap; }
.node.root { margin-top: 10px; padding-left: 30px; gap: 5px; }
.node.current { background: #d9d9d9; }
.pinned { margin-left: auto; margin-right: 3px; }
.scroll { display: flex; flex-direction: column; flex: none; width: 20px; background: #f0f0f0; color: #505050; }
.scroll button { height: 20px; display: grid; place-items: center; }
.thumb { background: #cdcdcd; margin-right: 1px; }
.tree-scroll .before { flex: 110; }
.tree-scroll .thumb { flex: 341; }
.tree-scroll .after { flex: 28; }
.file-scroll { margin-right: 1px; }
.file-scroll .before { flex: 269; }
.file-scroll .thumb { flex: 179; }
.file-scroll .after { flex: 31; }

.files { flex: 1; min-width: 0; overflow: hidden; margin-left: 2px; padding-left: 20px; border-left: 1px solid #f3f3f3; }
table { table-layout: fixed; width: 752px; border-collapse: separate; border-spacing: 0; }
.c-name { width: 322px; }
.c-date { width: 180px; }
.c-type { width: 150px; }
.c-size { width: 100px; }
th { position: relative; height: 32px; padding: 0 7px; border-right: 1px solid #e2e2e2; text-align: left; font-weight: 400; color: #4c607a; }
th:first-child { padding-left: 3px; }
.sort { position: absolute; top: 0; left: 50%; margin-left: -9px; color: #777; }
td { height: 27px; padding: 0 0 0 7px; color: #6d6d6d; white-space: nowrap; }
td:first-child { padding-left: 6px; color: #000; }
td:first-child svg { display: inline-block; vertical-align: middle; margin: -4px 6px 0 0; }
td:last-child { padding: 0 10px 0 0; text-align: right; }
.picked td { background: #d8e8f8; }
.picked td:last-child { background: linear-gradient(#d8e8f8, #d8e8f8) 0 0 / calc(100% - 5px) 100% no-repeat; }
.markup { position: absolute; left: 115px; top: 281px; width: 880px; height: 180px; pointer-events: none; }

/* status bar */
.status { display: flex; align-items: center; flex: none; height: 30px; padding: 0 6px 2px 17px; color: #25405f; }
.count { padding-right: 11px; border-right: 1px solid #f0f0f0; }
.views { display: flex; margin-left: auto; }
.view { width: 28px; height: 29px; display: grid; place-items: center; }
.view.on { background: #cce8f6; border: 1px solid #2a9fd8; }
```
